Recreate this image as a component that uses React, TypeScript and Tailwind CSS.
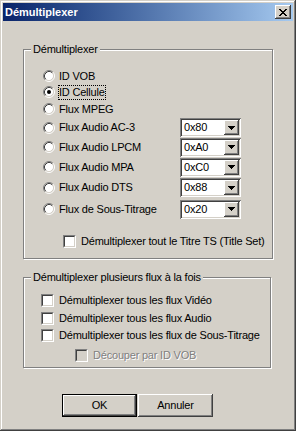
import React from "react";

const raised =
  "shadow-[inset_-1px_-1px_#404040,inset_1px_1px_#ffffff,inset_-2px_-2px_#808080,inset_2px_2px_#d4d0c8]";
const sunken =
  "shadow-[inset_1px_1px_#808080,inset_-1px_-1px_#ffffff,inset_2px_2px_#404040,inset_-2px_-2px_#d4d0c8]";

const Radio = ({ checked }: { checked?: boolean }) => (
  <svg width="12" height="12" viewBox="0 0 12 12" className="shrink-0">
    <circle cx="6" cy="6" r="4.5" fill="#ffffff" />
    <path d="M2.11 9.89 A5.5 5.5 0 0 1 9.89 2.11" fill="none" stroke="#808080" />
    <path d="M9.89 2.11 A5.5 5.5 0 0 1 2.11 9.89" fill="none" stroke="#ffffff" />
    <path d="M2.82 9.18 A4.5 4.5 0 0 1 9.18 2.82" fill="none" stroke="#404040" />
    <path d="M9.18 2.82 A4.5 4.5 0 0 1 2.82 9.18" fill="none" stroke="#d4d0c8" />
    {checked && <circle cx="6" cy="6" r="2" fill="#000000" />}
  </svg>
);

const Checkbox = ({ disabled }: { disabled?: boolean }) => (
  <div className="w-[13px] h-[13px] shrink-0 flex border border-t-[#808080] border-l-[#808080] border-b-white border-r-white">
    <div
      className={`flex-1 border border-t-[#404040] border-l-[#404040] border-b-[#d4d0c8] border-r-[#d4d0c8] ${
        disabled ? "bg-[#d4d0c8]" : "bg-white"
      }`}
    />
  </div>
);

// pixel glyphs of the classic Marlett close cross and combo arrow
const CloseGlyph = () => (
  <svg width="8" height="7" viewBox="0 0 8 7" shapeRendering="crispEdges">
    <path
      d="M0 0h2v1H0zM6 0h2v1H6zM1 1h2v1H1zM5 1h2v1H5zM2 2h4v1H2zM3 3h2v1H3zM2 4h4v1H2zM1 5h2v1H1zM5 5h2v1H5zM0 6h2v1H0zM6 6h2v1H6z"
      fill="#000000"
    />
  </svg>
);

const ArrowGlyph = () => (
  <svg width="7" height="4" viewBox="0 0 7 4" shapeRendering="crispEdges">
    <path d="M0 0h7v1H0zM1 1h5v1H1zM2 2h3v1H2zM3 3h1v1H3z" fill="#000000" />
  </svg>
);

const Combo = ({ value }: { value: string }) => (
  <div className={`w-[61px] h-[19px] bg-white flex items-center p-[2px] ${sunken}`}>
    <span className="flex-1 pl-[2px] leading-[13px]">{value}</span>
    <div className={`w-[15px] h-full bg-[#d4d0c8] flex items-center justify-center ${raised}`}>
      <ArrowGlyph />
    </div>
  </div>
);

const streams = [
  { label: "ID VOB", h: "h-[16px]" },
  { label: "ID Cellule", h: "h-[16px]", checked: true },
  { label: "Flux MPEG", h: "h-[18px]" },
  { label: "Flux Audio AC-3", h: "h-[19px]", id: "0x80" },
  { label: "Flux Audio LPCM", h: "h-[20px]", id: "0xA0" },
  { label: "Flux Audio MPA", h: "h-[20px]", id: "0xC0" },
  { label: "Flux Audio DTS", h: "h-[21px]", id: "0x88" },
  { label: "Flux de Sous-Titrage", h: "h-[22px]", id: "0x20" },
];

const multi = [
  { label: "Démultiplexer tous les flux Vidéo", h: "h-[17px]" },
  { label: "Démultiplexer tous les flux Audio", h: "h-[18px]" },
  { label: "Démultiplexer tous les flux de Sous-Titrage", h: "h-[17px]" },
];

export default function App() {
  return (
    <div className="w-[296px] h-[431px] bg-[#d4d0c8] p-[3px] flex flex-col text-[11px] text-black whitespace-nowrap font-['Liberation_Sans',Arial,sans-serif] shadow-[inset_-1px_-1px_#404040,inset_1px_1px_#d4d0c8,inset_-2px_-2px_#808080,inset_2px_2px_#ffffff]">
      <div className="h-[18px] flex items-center justify-between bg-gradient-to-r from-[#0a246a] to-[#a6caf0] pl-[2px] pr-[2px]">
        <span className="font-bold text-white leading-[13px]">Démultiplexer</span>
        <div className={`w-[16px] h-[14px] bg-[#d4d0c8] flex items-center justify-center ${raised}`}>
          <CloseGlyph />
        </div>
      </div>

      <div className="flex flex-col pl-[20px] tracking-[-0.2px]">
        <fieldset className="mt-[22px] w-[250px] h-[216px] min-w-0 border border-[#808080] shadow-[inset_1px_1px_#ffffff,1px_1px_#ffffff]">
          <legend className="ml-[7px] px-[2px] leading-[13px] bg-[#d4d0c8]">Démultiplexer</legend>
          <div className="flex flex-col pl-[19px] pt-[12px]">
            {streams.map((s) => (
              <div key={s.label} className={`flex items-center ${s.h}`}>
                <div className="w-[137px] flex items-center">
                  <Radio checked={s.checked} />
                  <span
                    className={`ml-[3px] leading-[13px] border ${
                      s.checked ? "border-dotted border-black" : "border-transparent"
                    }`}
                  >
                    {s.label}
                  </span>
                </div>
                {s.id && <Combo value={s.id} />}
              </div>
            ))}
            <div className="flex items-center h-[16px] mt-[13px] pl-[20px]">
              <Checkbox />
              <span className="ml-[5px] leading-[13px]">Démultiplexer tout le Titre TS (Title Set)</span>
            </div>
          </div>
        </fieldset>

        <fieldset className="mt-[12px] w-[248px] h-[97px] min-w-0 border border-[#808080] shadow-[inset_1px_1px_#ffffff,1px_1px_#ffffff]">
          <legend className="ml-[7px] px-[2px] leading-[13px] bg-[#d4d0c8]">
            Démultiplexer plusieurs flux à la fois
          </legend>
          <div className="flex flex-col pl-[17px] pt-[8px]">
            {multi.map((m) => (
              <div key={m.label} className={`flex items-center ${m.h}`}>
                <Checkbox />
                <span className="ml-[5px] leading-[13px]">{m.label}</span>
              </div>
            ))}
            <div className="flex items-center h-[20px] pl-[34px] mt-[1px]">
              <Checkbox disabled />
              <span className="ml-[5px] leading-[13px] text-[#808080] [text-shadow:1px_1px_0_#ffffff]">
                Découper par ID VOB
              </span>
            </div>
          </div>
        </fieldset>

        <div className="flex mt-[26px] ml-[39px]">
          <div className="w-[75px] h-[23px] border border-black">
            <div className={`w-full h-full flex items-center justify-center ${raised}`}>OK</div>
          </div>
          <div className={`w-[75px] h-[23px] ml-[1px] flex items-center justify-center ${raised}`}>Annuler</div>
        </div>
      </div>
    </div>
  );
}
